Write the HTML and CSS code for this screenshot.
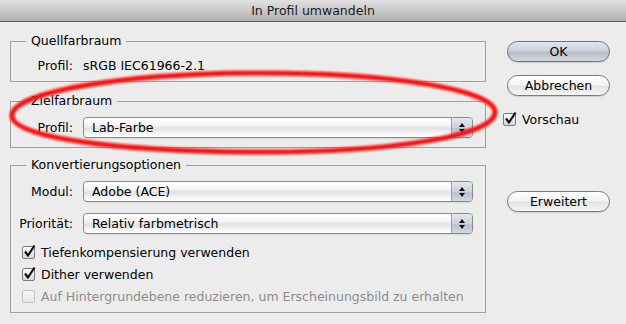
FILE: index.html
```html
<!DOCTYPE html>
<html lang="de">
<head>
    <meta charset="UTF-8">
    <title>In Profil umwandeln</title>
    <link rel="stylesheet" href="styles.css">
</head>
<body>
    <div class="titlebar">In Profil umwandeln</div>

    <div class="dialog">
        <div class="groups">
            <fieldset class="group group-source">
                <legend>Quellfarbraum</legend>
                <div class="row">
                    <span class="label">Profil:</span>
                    <span class="value">sRGB IEC61966-2.1</span>
                </div>
            </fieldset>

            <fieldset class="group group-target">
                <legend>Zielfarbraum</legend>
                <div class="row">
                    <span class="label">Profil:</span>
                    <div class="popup">
                        <span class="popup-text">Lab-Farbe</span>
                        <span class="popup-arrows">
                            <svg width="8" height="12" viewBox="0 0 8 12"><path d="M4 1 L7 5 L1 5 Z M1 7 L7 7 L4 11 Z" fill="#111"/></svg>
                        </span>
                    </div>
                </div>
            </fieldset>

            <fieldset class="group group-options">
                <legend>Konvertierungsoptionen</legend>
                <div class="row">
                    <span class="label">Modul:</span>
                    <div class="popup">
                        <span class="popup-text">Adobe (ACE)</span>
                        <span class="popup-arrows">
                            <svg width="8" height="12" viewBox="0 0 8 12"><path d="M4 1 L7 5 L1 5 Z M1 7 L7 7 L4 11 Z" fill="#111"/></svg>
                        </span>
                    </div>
                </div>
                <div class="row row-second">
                    <span class="label">Priorität:</span>
                    <div class="popup">
                        <span class="popup-text">Relativ farbmetrisch</span>
                        <span class="popup-arrows">
                            <svg width="8" height="12" viewBox="0 0 8 12"><path d="M4 1 L7 5 L1 5 Z M1 7 L7 7 L4 11 Z" fill="#111"/></svg>
                        </span>
                    </div>
                </div>

                <div class="checks">
                    <label class="check">
                        <span class="box"><svg width="15" height="15" viewBox="0 0 15 15"><path d="M3 7.5 L6 11.5 L12.5 1.5" fill="none" stroke="#111" stroke-width="2.2" stroke-linejoin="round"/></svg></span>
                        Tiefenkompensierung verwenden
                    </label>
                    <label class="check">
                        <span class="box"><svg width="15" height="15" viewBox="0 0 15 15"><path d="M3 7.5 L6 11.5 L12.5 1.5" fill="none" stroke="#111" stroke-width="2.2" stroke-linejoin="round"/></svg></span>
                        Dither verwenden
                    </label>
                    <label class="check disabled">
                        <span class="box"></span>
                        Auf Hintergrundebene reduzieren, um Erscheinungsbild zu erhalten
                    </label>
                </div>
            </fieldset>
        </div>

        <div class="buttons">
            <button class="btn btn-default">OK</button>
            <button class="btn btn-cancel">Abbrechen</button>
            <label class="check preview">
                <span class="box"><svg width="15" height="15" viewBox="0 0 15 15"><path d="M3 7.5 L6 11.5 L12.5 1.5" fill="none" stroke="#111" stroke-width="2.2" stroke-linejoin="round"/></svg></span>
                Vorschau
            </label>
            <button class="btn btn-more">Erweitert</button>
        </div>
    </div>

    <!-- red marker drawn over the target profile -->
    <svg class="marker" width="626" height="324" viewBox="0 0 626 324">
        <defs>
            <filter id="soft" x="-10%" y="-50%" width="120%" height="200%">
                <feGaussianBlur stdDeviation="1.3"/>
            </filter>
        </defs>
        <path d="M12,115 C14,92 120,74 250,73 C390,72 495,90 495,112 C495,136 390,153 250,152 C120,151 10,138 12,115 Z"
              fill="none" stroke="#ff1010" stroke-width="5" filter="url(#soft)"/>
    </svg>
</body>
</html>
```

FILE: styles.css
```css
body {
    margin: 0;
    width: 626px;
    height: 324px;
    background: #ececec;
    font-family: "DejaVu Sans", sans-serif;
    font-size: 12.5px;
    color: #000;
    position: relative;
    overflow: hidden;
}
.titlebar {
    height: 21px;
    line-height: 21px;
    text-align: center;
    color: #1a1a1a;
    background: linear-gradient(#e2e2e2, #b0b0b0);
    border-bottom: 1px solid #5e5e5e;
}
.dialog {
    display: grid;
    grid-template-columns: 476px 103px;
    column-gap: 21px;
    padding-left: 10px;
}
.groups {
    padding-top: 12px;
}
.group {
    margin: 0 0 12px;
    padding: 0 12px 0 0;
    border: 1px solid #a0a0a0;
    min-width: 0;
}
.group legend {
    margin-left: 15px;
    padding: 0 5px;
    line-height: 14px;
}
.row {
    display: grid;
    grid-template-columns: 62px 1fr;
    column-gap: 10px;
    align-items: center;
}
.label {
    text-align: right;
}
.group-source .row {
    margin-top: 10px;
    margin-bottom: 7px;
    line-height: 16px;
}
.group-target {
    padding-bottom: 9px;
    margin-bottom: 10px;
}
.group-target .row,
.group-options .row {
    margin-top: 9px;
}
.group-options .row-second {
    margin-top: 11px;
}
.popup {
    height: 19px;
    display: flex;
    border: 1px solid #8a8a8a;
    border-radius: 4px;
    background: linear-gradient(#ffffff 0%, #f6f6f6 35%, #e2e2e2 55%, #f4f4f4 80%, #ffffff 100%);
    box-shadow: 0 1px 0 rgba(0, 0, 0, 0.08);
    overflow: hidden;
}
.popup-text {
    flex: 1;
    padding-left: 8px;
    line-height: 19px;
}
.popup-arrows {
    width: 20px;
    display: flex;
    align-items: center;
    justify-content: center;
    border-left: 1px solid #9aa0aa;
    background: linear-gradient(#e4e8ee 0%, #cdd3dc 50%, #b9c1cd 55%, #d2d8e0 100%);
}
.checks {
    margin-top: 7px;
    padding-bottom: 5px;
    padding-left: 11px;
}
.check {
    height: 22px;
    display: flex;
    align-items: center;
    gap: 6px;
    white-space: nowrap;
}
.box {
    flex: none;
    width: 11px;
    height: 11px;
    position: relative;
    border: 1px solid #7c7c7c;
    border-radius: 2px;
    background: linear-gradient(#fdfdfd, #d8d8d8);
}
.box svg {
    position: absolute;
    left: -1px;
    top: -3px;
}
.check.disabled {
    color: #8c8c8c;
}
.check.disabled .box {
    border-color: #c2c2c2;
    background: linear-gradient(#f6f6f6, #e6e6e6);
}
.buttons {
    display: flex;
    flex-direction: column;
    padding-top: 19px;
}
.btn {
    height: 21px;
    padding: 0;
    font-family: inherit;
    font-size: 12.5px;
    color: #000;
    border: 1px solid #7a7a7a;
    border-radius: 11px;
    background: linear-gradient(#ffffff 0%, #f4f4f4 45%, #e4e4e4 55%, #f6f6f6 100%);
    box-shadow: 0 1px 1px rgba(0, 0, 0, 0.12);
}
.btn-default {
    border-color: #6e737b;
    background: linear-gradient(#e2e6ec 0%, #cdd2da 45%, #b7bec9 55%, #d4d9e0 100%);
}
.btn-cancel {
    margin-top: 13px;
}
.preview {
    margin-top: 12px;
    margin-left: -4px;
}
.btn-more {
    margin-top: 61px;
}
.marker {
    position: absolute;
    left: 0;
    top: 0;
    pointer-events: none;
}
```
